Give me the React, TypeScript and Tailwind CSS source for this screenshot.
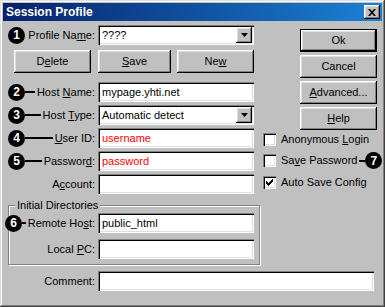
import React from 'react'

const sunken = 'bg-white shadow-[inset_1px_1px_#808080,inset_2px_2px_#000,inset_-1px_-1px_#fff,inset_-2px_-2px_#dfdfdf]'
const raised = 'bg-[#c0c0c0] shadow-[inset_-1px_-1px_#000,inset_1px_1px_#fff,inset_-2px_-2px_#808080,inset_2px_2px_#dfdfdf]'

const Acc = ({ text, at }: { text: string; at?: number }) =>
    at === undefined ? (
        <>{text}</>
    ) : (
        <>
            {text.slice(0, at)}
            <span className="underline underline-offset-[1px]">{text[at]}</span>
            {text.slice(at + 1)}
        </>
    )

const Marker = ({ n, className = '' }: { n: number; className?: string }) => (
    <span className={`flex h-[17px] w-[17px] shrink-0 items-center justify-center rounded-full bg-black text-[12px] font-bold leading-none text-white ${className}`}>
        {n}
    </span>
)

const Arrow = () => (
    <svg width="7" height="4" viewBox="0 0 7 4">
        <path d="M0 0h7L3.5 4z" fill="#000" />
    </svg>
)

type FieldProps = { value?: string; red?: boolean; combo?: boolean; className?: string }

const Field = ({ value = '', red, combo, className = 'w-[156px]' }: FieldProps) => (
    <div className={`flex h-[20px] shrink-0 items-center pl-[4px] pr-[2px] ${sunken} ${className}`}>
        <span className={`flex-1 whitespace-nowrap ${red ? 'text-[#ff0000]' : 'text-black'}`}>{value}</span>
        {combo && (
            <span className={`flex h-[16px] w-[16px] items-center justify-center ${raised}`}>
                <Arrow />
            </span>
        )}
    </div>
)

type RowProps = {
    n?: number
    line?: boolean
    label: string
    acc?: number
    labelBox?: string
    markerClass?: string
    className?: string
    children: React.ReactNode
}

const Row = ({ n, line = true, label, acc, labelBox = 'w-[95px] pl-[5px]', markerClass = '', className = '', children }: RowProps) => (
    <div className={`flex h-[20px] items-center ${className}`}>
        <div className={`flex shrink-0 items-center pr-[3px] ${labelBox}`}>
            {n !== undefined && <Marker n={n} className={markerClass} />}
            <span className={`h-[2px] flex-1 ${n !== undefined && line ? 'bg-black' : ''}`} />
            <span className="ml-[2px] whitespace-nowrap">
                <Acc text={label} at={acc} />
            </span>
        </div>
        {children}
    </div>
)

const Btn = ({ label, acc, className = '' }: { label: string; acc?: number; className?: string }) => (
    <button className={`flex h-[23px] shrink-0 items-center justify-center ${raised} ${className}`}>
        <Acc text={label} at={acc} />
    </button>
)

const Check = ({ label, acc, checked, className = '', children }: { label: string; acc?: number; checked?: boolean; className?: string; children?: React.ReactNode }) => (
    <div className={`ml-[3px] flex h-[13px] items-center ${className}`}>
        <span className={`flex h-[13px] w-[13px] shrink-0 items-center justify-center ${sunken}`}>
            {checked && (
                <svg width="7" height="7" viewBox="0 0 7 7">
                    <path d="M0 2h1v1h1v1h1V3h1V2h1V1h1V0h1v3H6v1H5v1H4v1H3v1H2V6H1V5H0z" fill="#000" />
                </svg>
            )}
        </span>
        <span className="ml-[5px] whitespace-nowrap">
            <Acc text={label} at={acc} />
        </span>
        {children}
    </div>
)

export default function App() {
    return (
        <div className="flex h-[307px] w-[385px] flex-col bg-[#c0c0c0] p-[3px] font-['Liberation_Sans',Arial,sans-serif] text-[11px] leading-[13px] text-black shadow-[inset_-1px_-1px_#404040,inset_1px_1px_#dfdfdf,inset_-2px_-2px_#808080,inset_2px_2px_#fff]">

            {/* title bar */}
            <div className="flex h-[18px] shrink-0 items-center justify-between bg-linear-to-r from-[#0a216c] to-[#1c82d6] pl-[3px] pr-[2px]">
                <span className="text-[12px] font-bold leading-none text-white">Session Profile</span>
                <button className={`flex h-[14px] w-[16px] items-center justify-center ${raised}`}>
                    <svg width="8" height="7" viewBox="0 0 8 7">
                        <path d="M0 0h2l2 2.3L6 0h2L5 3.5 8 7H6L4 4.7 2 7H0l3-3.5z" fill="#000" />
                    </svg>
                </button>
            </div>

            <div className="flex">

                {/* left column */}
                <div className="flex w-[257px] shrink-0 flex-col">
                    <Row n={1} line={false} label="Profile Name:" acc={10} className="mt-[4px]">
                        <Field value="????" combo />
                    </Row>

                    <div className="mt-[5px] flex pl-[11px]">
                        <Btn label="Delete" acc={1} className="w-[77px]" />
                        <Btn label="Save" acc={0} className="ml-[7px] w-[73px]" />
                        <Btn label="New" acc={2} className="ml-[6px] w-[77px]" />
                    </div>

                    <Row n={2} label="Host Name:" acc={5} className="mt-[9px]">
                        <Field value="mypage.yhti.net" />
                    </Row>
                    <Row n={3} label="Host Type:" acc={5} className="mt-[3px]">
                        <Field value="Automatic detect" combo />
                    </Row>
                    <Row n={4} label="User ID:" acc={0} className="mt-[3px]">
                        <Field value="username" red />
                    </Row>
                    <Row n={5} label="Password:" acc={7} className="mt-[3px]">
                        <Field value="password" red />
                    </Row>
                    <Row label="Account:" acc={1} className="mt-[3px]">
                        <Field />
                    </Row>

                    <fieldset className="mt-[5px] ml-[5px] w-[252px] border border-[#808080] pb-[5px] shadow-[inset_1px_1px_#fff,1px_1px_#fff]">
                        <legend className="ml-[6px] bg-[#c0c0c0] px-[2px] leading-[13px]">Initial Directories</legend>
                        <Row n={6} label="Remote Host:" acc={9} labelBox="w-[89px]" markerClass="-ml-[4px]" className="mt-[1px]">
                            <Field value="public_html" />
                        </Row>
                        <Row label="Local PC:" acc={6} labelBox="w-[89px]" className="mt-[6px]">
                            <Field />
                        </Row>
                    </fieldset>
                </div>

                {/* right column */}
                <div className="flex flex-1 flex-col">
                    <button className={`mt-[8px] ml-[40px] flex h-[23px] w-[77px] items-center justify-center border border-black ${raised}`}>
                        Ok
                    </button>
                    <Btn label="Cancel" className="mt-[3px] ml-[40px] w-[77px]" />
                    <Btn label="Advanced..." acc={0} className="mt-[3px] ml-[40px] w-[77px]" />
                    <Btn label="Help" acc={0} className="mt-[3px] ml-[40px] w-[77px]" />

                    <Check label="Anonymous Login" acc={10} className="mt-[3px]" />
                    <Check label="Save Password" acc={2} className="mt-[8px]">
                        <span className="ml-[2px] h-[2px] w-[6px] bg-black" />
                        <Marker n={7} />
                    </Check>
                    <Check label="Auto Save Config" checked className="mt-[9px]" />
                </div>
            </div>

            <Row label="Comment:" className="mt-[6px]">
                <Field className="w-[276px]" />
            </Row>
        </div>
    )
}
